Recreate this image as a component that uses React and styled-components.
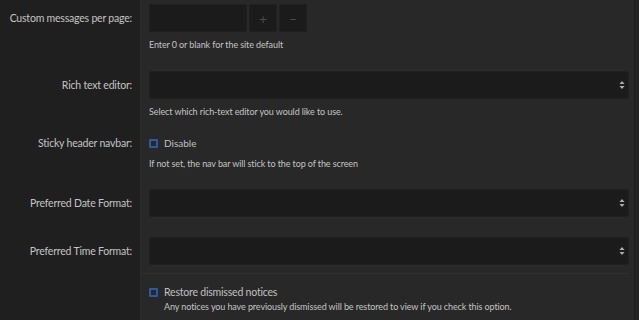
import React from 'react';
import styled, { createGlobalStyle } from 'styled-components';

const GlobalStyle = createGlobalStyle`
  html, body {
    margin: 0;
    padding: 0;
    background: #282828;
  }
  body {
    font-family: Lato, "Noto Sans", sans-serif;
    -webkit-font-smoothing: antialiased;
  }
`;

const Page = styled.div`
  display: flex;
  width: 639px;
  height: 320px;
  overflow: hidden;
  background: #282828;
`;

const Form = styled.div`
  flex: 1;
  display: flex;
  flex-direction: column;
  padding-right: 5px;
`;

const Edge = styled.div`
  width: 4px;
  background: #232323;
  border-left: 1px solid #1d1d1d;
`;

const Row = styled.div`
  display: grid;
  grid-template-columns: 141px 1fr;
  flex: ${(p) => (p.$grow ? 1 : 'none')};
`;

const LabelCell = styled.div`
  background: #1f1f1f;
  border-right: 1px solid #2c2c2c;
  padding: ${(p) => p.$pt || 0}px 8px ${(p) => p.$pb || 0}px 0;
  text-align: right;
  font-size: 10.5px;
  letter-spacing: -0.2px;
  color: #c4c4c4;
  line-height: ${(p) => p.$lh || 28}px;
  white-space: nowrap;
`;

const FieldCell = styled.div`
  padding: ${(p) => p.$pt || 0}px 0 ${(p) => p.$pb || 0}px 8px;
  border-bottom: ${(p) => (p.$rule ? '1px solid #2f2f2f' : 'none')};
  display: flex;
  flex-direction: column;
`;

const Help = styled.div`
  margin-top: ${(p) => (p.$mt === undefined ? 6 : p.$mt)}px;
  margin-left: ${(p) => p.$ml || 0}px;
  font-size: 9px;
  letter-spacing: -0.1px;
  line-height: 13px;
  color: #c4c4c4;
  white-space: nowrap;
`;

const NumberGroup = styled.div`
  display: flex;
  gap: 2px;
  height: 28px;
`;

const Box = styled.div`
  background: #1b1b1b;
  border: 1px solid #202020;
  border-radius: 2px;
  box-sizing: border-box;
  height: 28px;
`;

const NumberInput = styled(Box)`
  width: 98px;
`;

const StepButton = styled(Box)`
  width: 28px;
  display: flex;
  align-items: center;
  justify-content: center;
  color: #4a4a4a;
  font-size: 14px;
`;

const Select = styled(Box)`
  display: flex;
  align-items: center;
  justify-content: flex-end;
  padding-right: 3px;
`;

const CheckLine = styled.label`
  display: flex;
  align-items: center;
  height: 16px;
  font-size: ${(p) => (p.$big ? 10.5 : 10)}px;
  letter-spacing: ${(p) => (p.$big ? -0.2 : 0)}px;
  color: #c0c0c0;
`;

const Check = styled.span`
  width: 9px;
  height: 9px;
  box-sizing: border-box;
  border: 2px solid #2b5aa0;
  border-radius: 1px;
  margin-right: 6px;
`;

const Arrows = () => (
  <svg width="6" height="10" viewBox="0 0 6 10">
    <path d="M3 1 L5.5 4 H0.5 Z" fill="#b0b0b0" />
    <path d="M3 9 L5.5 6 H0.5 Z" fill="#b0b0b0" />
  </svg>
);

export default function App() {
  return (
    <>
      <GlobalStyle />
      <Page>
        <Form>
          <Row>
            <LabelCell $pt={4} $pb={20}>Custom messages per page:</LabelCell>
            <FieldCell $pt={4} $pb={20}>
              <NumberGroup>
                <NumberInput />
                <StepButton>+</StepButton>
                <StepButton>−</StepButton>
              </NumberGroup>
              <Help>Enter 0 or blank for the site default</Help>
            </FieldCell>
          </Row>
          <Row>
            <LabelCell $pb={17}>Rich text editor:</LabelCell>
            <FieldCell $pb={17}>
              <Select><Arrows /></Select>
              <Help>Select which rich-text editor you would like to use.</Help>
            </FieldCell>
          </Row>
          <Row>
            <LabelCell $lh={16} $pb={19}>Sticky header navbar:</LabelCell>
            <FieldCell $pb={19}>
              <CheckLine><Check />Disable</CheckLine>
              <Help>If not set, the nav bar will stick to the top of the screen</Help>
            </FieldCell>
          </Row>
          <Row>
            <LabelCell $pb={20}>Preferred Date Format:</LabelCell>
            <FieldCell $pb={20}>
              <Select><Arrows /></Select>
            </FieldCell>
          </Row>
          <Row>
            <LabelCell $pb={8}>Preferred Time Format:</LabelCell>
            <FieldCell $pb={8} $rule>
              <Select><Arrows /></Select>
            </FieldCell>
          </Row>
          <Row $grow>
            <LabelCell $pt={10} />
            <FieldCell $pt={10}>
              <CheckLine $big><Check />Restore dismissed notices</CheckLine>
              <Help $mt={0} $ml={15}>
                Any notices you have previously dismissed will be restored to view if you check this option.
              </Help>
            </FieldCell>
          </Row>
        </Form>
        <Edge />
      </Page>
    </>
  );
}
